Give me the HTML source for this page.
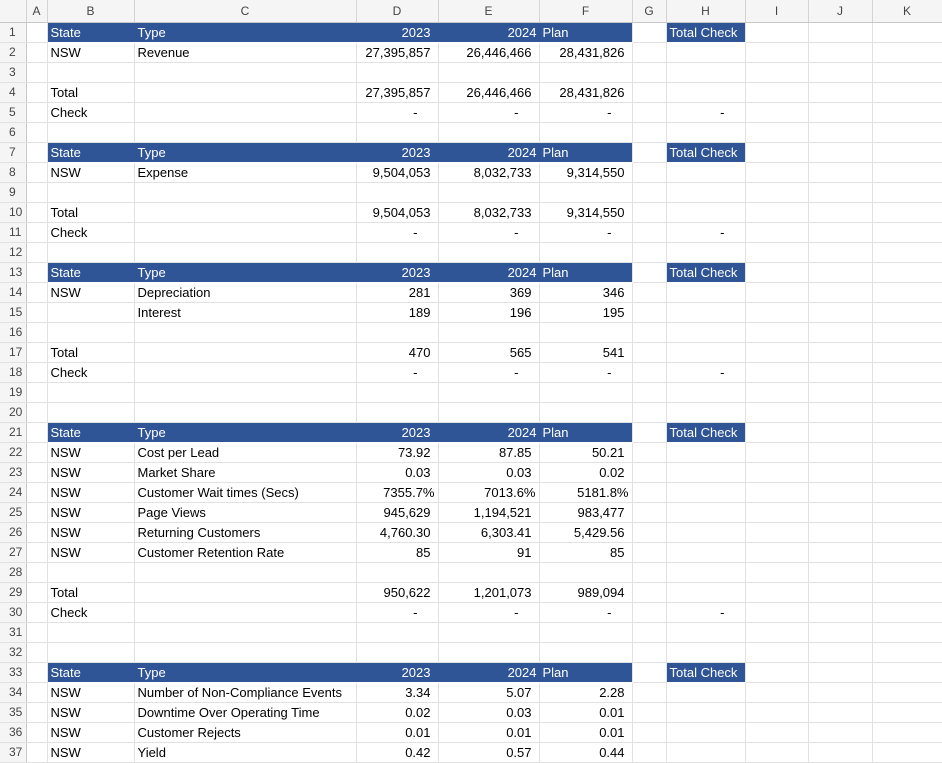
<!DOCTYPE html>
<html><head><meta charset="utf-8"><style>
body{margin:0;background:#fff;font-family:"Liberation Sans",Arial,sans-serif;font-size:13px;color:#000;overflow:hidden;width:942px;height:760px}
table{border-collapse:collapse;table-layout:fixed;width:942px}
td{height:19px;padding:0 3px;border-right:1px solid #e1e1e1;border-bottom:1px solid #e1e1e1;white-space:nowrap;overflow:hidden;line-height:19px}
tr.h td{height:22px;background:#f5f5f5;color:#444;text-align:center;border-right:1px solid #d4d4d4;border-bottom:1px solid #c8c8c8;font-size:12px}
td.n{color:#444;text-align:left;padding-left:9px;font-size:12px;background:#f5f5f5;border-right:1px solid #c8c8c8}
.b{background:#2f5597;color:#fff;border-right-color:#2f5597;border-bottom-color:#fff}
.bl{background:#2f5597;color:#fff;border-bottom-color:#fff}
.r{text-align:right;padding-right:7px}
.p{text-align:right;padding-right:3px}
.d{text-align:right;padding-right:20px}
</style></head><body>
<table>
<colgroup><col style="width:26px"><col style="width:21px"><col style="width:87px"><col style="width:222px"><col style="width:82px"><col style="width:101px"><col style="width:93px"><col style="width:34px"><col style="width:79px"><col style="width:63px"><col style="width:64px"><col style="width:70px"></colgroup>
<tr class="h"><td style="background:#f5f5f5"></td><td>A</td><td>B</td><td>C</td><td>D</td><td>E</td><td>F</td><td>G</td><td>H</td><td>I</td><td>J</td><td>K</td></tr>
<tr><td class="n">1</td><td></td><td class="b">State</td><td class="b">Type</td><td class="b r">2023</td><td class="b" style="text-align:right;padding-right:2px">2024</td><td class="bl">Plan</td><td></td><td class="bl">Total Check</td><td></td><td></td><td></td></tr>
<tr><td class="n">2</td><td></td><td>NSW</td><td>Revenue</td><td class="r">27,395,857</td><td class="r">26,446,466</td><td class="r">28,431,826</td><td></td><td></td><td></td><td></td><td></td></tr>
<tr><td class="n">3</td><td></td><td></td><td></td><td></td><td></td><td></td><td></td><td></td><td></td><td></td><td></td></tr>
<tr><td class="n">4</td><td></td><td>Total</td><td></td><td class="r">27,395,857</td><td class="r">26,446,466</td><td class="r">28,431,826</td><td></td><td></td><td></td><td></td><td></td></tr>
<tr><td class="n">5</td><td></td><td>Check</td><td></td><td class="d">-</td><td class="d">-</td><td class="d">-</td><td></td><td class="d">-</td><td></td><td></td><td></td></tr>
<tr><td class="n">6</td><td></td><td></td><td></td><td></td><td></td><td></td><td></td><td></td><td></td><td></td><td></td></tr>
<tr><td class="n">7</td><td></td><td class="b">State</td><td class="b">Type</td><td class="b r">2023</td><td class="b" style="text-align:right;padding-right:2px">2024</td><td class="bl">Plan</td><td></td><td class="bl">Total Check</td><td></td><td></td><td></td></tr>
<tr><td class="n">8</td><td></td><td>NSW</td><td>Expense</td><td class="r">9,504,053</td><td class="r">8,032,733</td><td class="r">9,314,550</td><td></td><td></td><td></td><td></td><td></td></tr>
<tr><td class="n">9</td><td></td><td></td><td></td><td></td><td></td><td></td><td></td><td></td><td></td><td></td><td></td></tr>
<tr><td class="n">10</td><td></td><td>Total</td><td></td><td class="r">9,504,053</td><td class="r">8,032,733</td><td class="r">9,314,550</td><td></td><td></td><td></td><td></td><td></td></tr>
<tr><td class="n">11</td><td></td><td>Check</td><td></td><td class="d">-</td><td class="d">-</td><td class="d">-</td><td></td><td class="d">-</td><td></td><td></td><td></td></tr>
<tr><td class="n">12</td><td></td><td></td><td></td><td></td><td></td><td></td><td></td><td></td><td></td><td></td><td></td></tr>
<tr><td class="n">13</td><td></td><td class="b">State</td><td class="b">Type</td><td class="b r">2023</td><td class="b" style="text-align:right;padding-right:2px">2024</td><td class="bl">Plan</td><td></td><td class="bl">Total Check</td><td></td><td></td><td></td></tr>
<tr><td class="n">14</td><td></td><td>NSW</td><td>Depreciation</td><td class="r">281</td><td class="r">369</td><td class="r">346</td><td></td><td></td><td></td><td></td><td></td></tr>
<tr><td class="n">15</td><td></td><td></td><td>Interest</td><td class="r">189</td><td class="r">196</td><td class="r">195</td><td></td><td></td><td></td><td></td><td></td></tr>
<tr><td class="n">16</td><td></td><td></td><td></td><td></td><td></td><td></td><td></td><td></td><td></td><td></td><td></td></tr>
<tr><td class="n">17</td><td></td><td>Total</td><td></td><td class="r">470</td><td class="r">565</td><td class="r">541</td><td></td><td></td><td></td><td></td><td></td></tr>
<tr><td class="n">18</td><td></td><td>Check</td><td></td><td class="d">-</td><td class="d">-</td><td class="d">-</td><td></td><td class="d">-</td><td></td><td></td><td></td></tr>
<tr><td class="n">19</td><td></td><td></td><td></td><td></td><td></td><td></td><td></td><td></td><td></td><td></td><td></td></tr>
<tr><td class="n">20</td><td></td><td></td><td></td><td></td><td></td><td></td><td></td><td></td><td></td><td></td><td></td></tr>
<tr><td class="n">21</td><td></td><td class="b">State</td><td class="b">Type</td><td class="b r">2023</td><td class="b" style="text-align:right;padding-right:2px">2024</td><td class="bl">Plan</td><td></td><td class="bl">Total Check</td><td></td><td></td><td></td></tr>
<tr><td class="n">22</td><td></td><td>NSW</td><td>Cost per Lead</td><td class="r">73.92</td><td class="r">87.85</td><td class="r">50.21</td><td></td><td></td><td></td><td></td><td></td></tr>
<tr><td class="n">23</td><td></td><td>NSW</td><td>Market Share</td><td class="r">0.03</td><td class="r">0.03</td><td class="r">0.02</td><td></td><td></td><td></td><td></td><td></td></tr>
<tr><td class="n">24</td><td></td><td>NSW</td><td>Customer Wait times (Secs)</td><td class="p">7355.7%</td><td class="p">7013.6%</td><td class="p">5181.8%</td><td></td><td></td><td></td><td></td><td></td></tr>
<tr><td class="n">25</td><td></td><td>NSW</td><td>Page Views</td><td class="r">945,629</td><td class="r">1,194,521</td><td class="r">983,477</td><td></td><td></td><td></td><td></td><td></td></tr>
<tr><td class="n">26</td><td></td><td>NSW</td><td>Returning Customers</td><td class="r">4,760.30</td><td class="r">6,303.41</td><td class="r">5,429.56</td><td></td><td></td><td></td><td></td><td></td></tr>
<tr><td class="n">27</td><td></td><td>NSW</td><td>Customer Retention Rate</td><td class="r">85</td><td class="r">91</td><td class="r">85</td><td></td><td></td><td></td><td></td><td></td></tr>
<tr><td class="n">28</td><td></td><td></td><td></td><td></td><td></td><td></td><td></td><td></td><td></td><td></td><td></td></tr>
<tr><td class="n">29</td><td></td><td>Total</td><td></td><td class="r">950,622</td><td class="r">1,201,073</td><td class="r">989,094</td><td></td><td></td><td></td><td></td><td></td></tr>
<tr><td class="n">30</td><td></td><td>Check</td><td></td><td class="d">-</td><td class="d">-</td><td class="d">-</td><td></td><td class="d">-</td><td></td><td></td><td></td></tr>
<tr><td class="n">31</td><td></td><td></td><td></td><td></td><td></td><td></td><td></td><td></td><td></td><td></td><td></td></tr>
<tr><td class="n">32</td><td></td><td></td><td></td><td></td><td></td><td></td><td></td><td></td><td></td><td></td><td></td></tr>
<tr><td class="n">33</td><td></td><td class="b">State</td><td class="b">Type</td><td class="b r">2023</td><td class="b" style="text-align:right;padding-right:2px">2024</td><td class="bl">Plan</td><td></td><td class="bl">Total Check</td><td></td><td></td><td></td></tr>
<tr><td class="n">34</td><td></td><td>NSW</td><td>Number of Non-Compliance Events</td><td class="r">3.34</td><td class="r">5.07</td><td class="r">2.28</td><td></td><td></td><td></td><td></td><td></td></tr>
<tr><td class="n">35</td><td></td><td>NSW</td><td>Downtime Over Operating Time</td><td class="r">0.02</td><td class="r">0.03</td><td class="r">0.01</td><td></td><td></td><td></td><td></td><td></td></tr>
<tr><td class="n">36</td><td></td><td>NSW</td><td>Customer Rejects</td><td class="r">0.01</td><td class="r">0.01</td><td class="r">0.01</td><td></td><td></td><td></td><td></td><td></td></tr>
<tr><td class="n">37</td><td></td><td>NSW</td><td>Yield</td><td class="r">0.42</td><td class="r">0.57</td><td class="r">0.44</td><td></td><td></td><td></td><td></td><td></td></tr>
</table>
</body></html>
